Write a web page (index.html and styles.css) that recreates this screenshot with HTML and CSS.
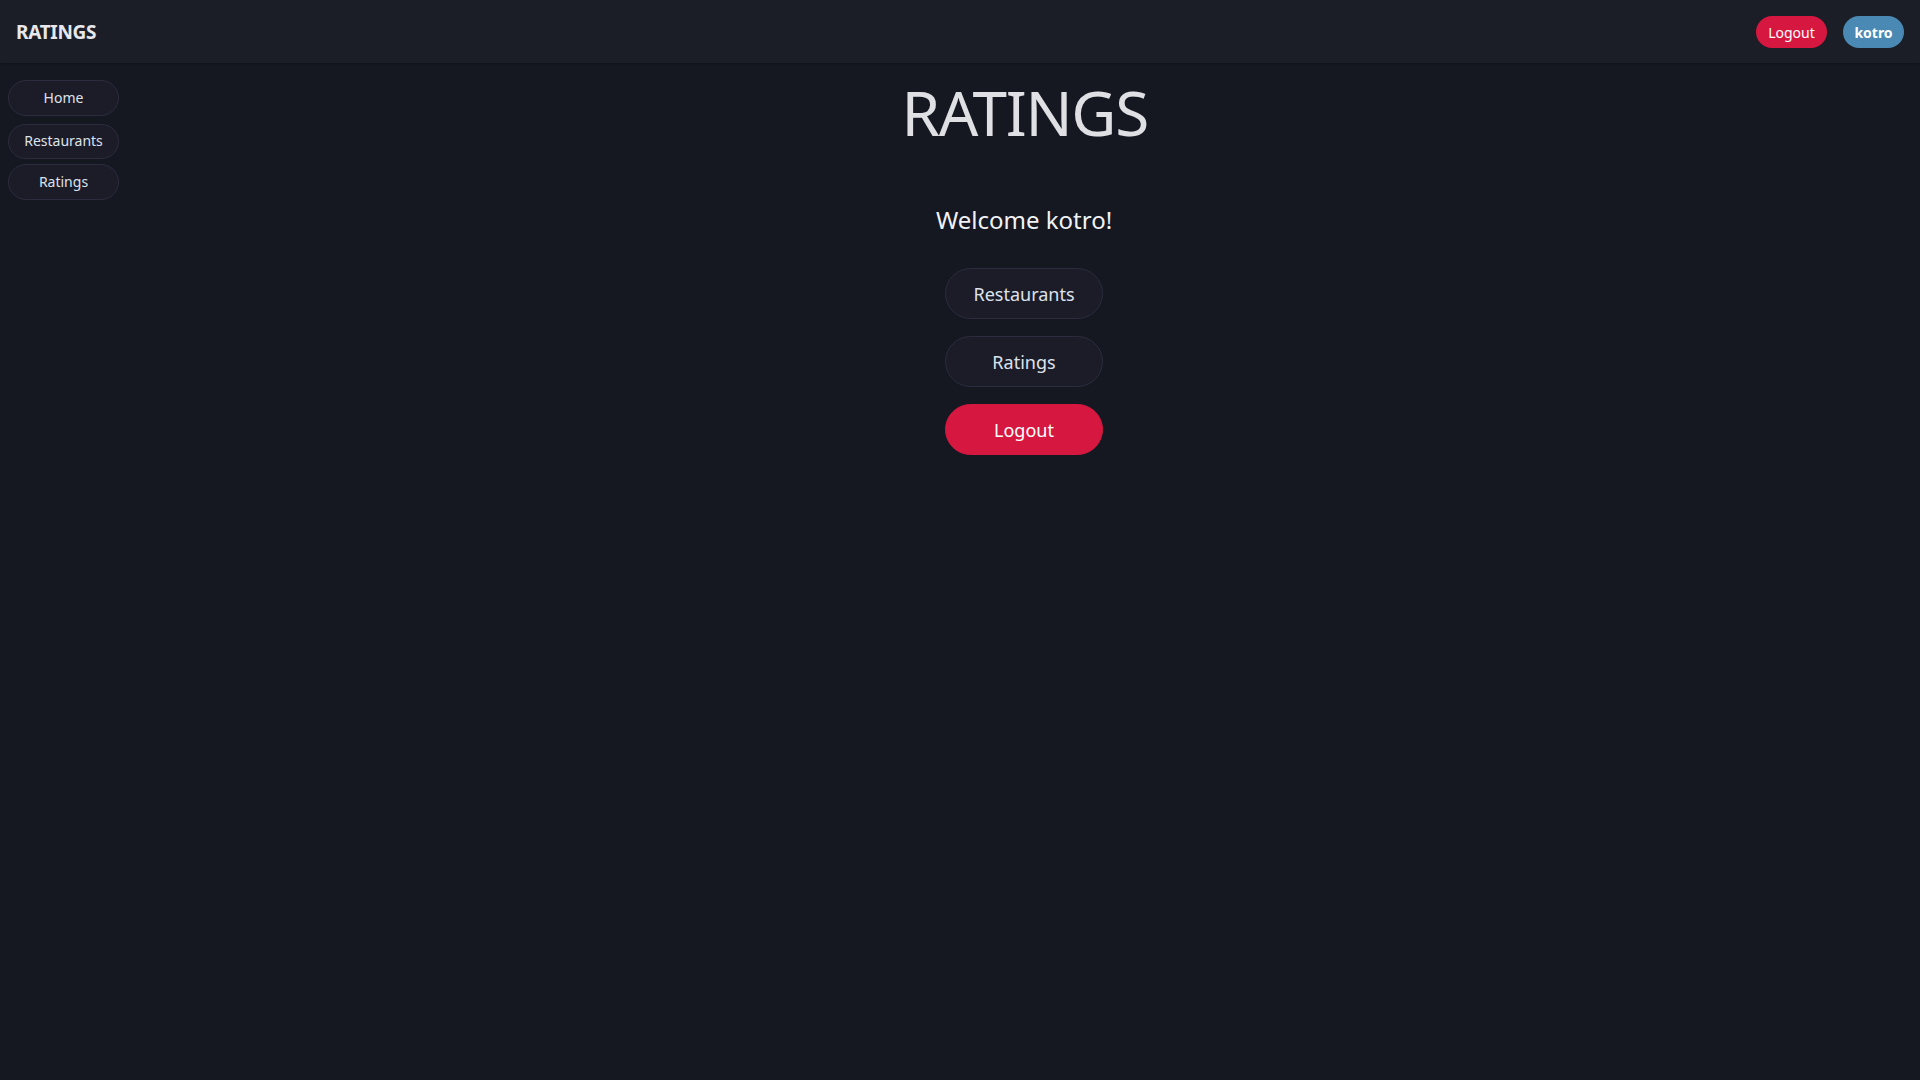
FILE: index.html
```html
<!DOCTYPE html>
<html lang="en">
<head>
<meta charset="utf-8">
<title>Ratings</title>
<link rel="stylesheet" href="styles.css">
</head>
<body>
<header class="topbar">
  <div class="brand">RATINGS</div>
  <div class="top-actions">
    <button class="pill pill-red">Logout</button>
    <button class="pill pill-blue">kotro</button>
  </div>
</header>
<div class="layout">
  <nav class="sidebar">
    <a class="side-btn side-home">Home</a>
    <a class="side-btn side-rest">Restaurants</a>
    <a class="side-btn">Ratings</a>
  </nav>
  <main class="main">
    <h1 class="title">RATINGS</h1>
    <p class="welcome">Welcome kotro!</p>
    <div class="actions">
      <button class="big-btn">Restaurants</button>
      <button class="big-btn">Ratings</button>
      <button class="big-btn big-red">Logout</button>
    </div>
  </main>
</div>
</body>
</html>
```

FILE: styles.css
```css
* { box-sizing: border-box; }
html, body {
  margin: 0;
  padding: 0;
  height: 100%;
}
body {
  background: #151821;
  color: #e1e4ea;
  font-family: "Noto Sans", "Open Sans", sans-serif;
}
.topbar {
  height: 63px;
  background: #1b1e27;
  display: flex;
  align-items: center;
  justify-content: space-between;
  padding: 0 16px;
  box-shadow: 0 1px 2px rgba(0,0,0,0.25);
}
.brand {
  font-size: 19px;
  font-weight: 700;
  color: #e6e8ee;
  letter-spacing: -0.3px;
}
.top-actions {
  display: flex;
  gap: 16px;
  padding-top: 1px;
}
.pill {
  height: 32px;
  border: none;
  border-radius: 16px;
  font-family: inherit;
  font-size: 14px;
  color: #fff;
  padding: 0;
}
.pill-red { background: #d6173f; width: 71px; }
.pill-blue { background: #4a89b4; width: 61px; font-weight: 700; }
.layout {
  display: flex;
}
.sidebar {
  width: 128px;
  flex: none;
  display: flex;
  flex-direction: column;
  padding: 17px 0 0 8px;
}
.side-btn {
  width: 111px;
  height: 36px;
  display: flex;
  align-items: center;
  justify-content: center;
  background: #1c1c28;
  border: 1px solid #2b2c3e;
  border-radius: 18px;
  font-size: 14px;
  line-height: 1;
  padding-bottom: 1px;
  color: #dde3ec;
}
.side-home { margin-bottom: 8px; }
.side-rest { height: 35px; margin-bottom: 5px; }
.main {
  flex: 1;
  display: flex;
  flex-direction: column;
  align-items: center;
}
.title {
  margin: 6px 0 0;
  font-size: 62px;
  font-weight: 400;
  line-height: 87px;
  letter-spacing: -1.3px;
  padding-left: 1.3px;
  color: #dfe0e4;
}
.welcome {
  margin: 47px 0 0;
  font-size: 24px;
  line-height: 33px;
  color: #f1f2f5;
}
.actions {
  margin-top: 32px;
  display: flex;
  flex-direction: column;
  gap: 17px;
}
.big-btn {
  width: 158px;
  height: 51px;
  border-radius: 26px;
  background: #1c1c28;
  border: 1px solid #2b2c3e;
  font-family: inherit;
  font-size: 18px;
  color: #dde3ec;
  padding: 0;
}
.big-red {
  background: #d6173f;
  border-color: #d6173f;
  color: #fff;
}
```
